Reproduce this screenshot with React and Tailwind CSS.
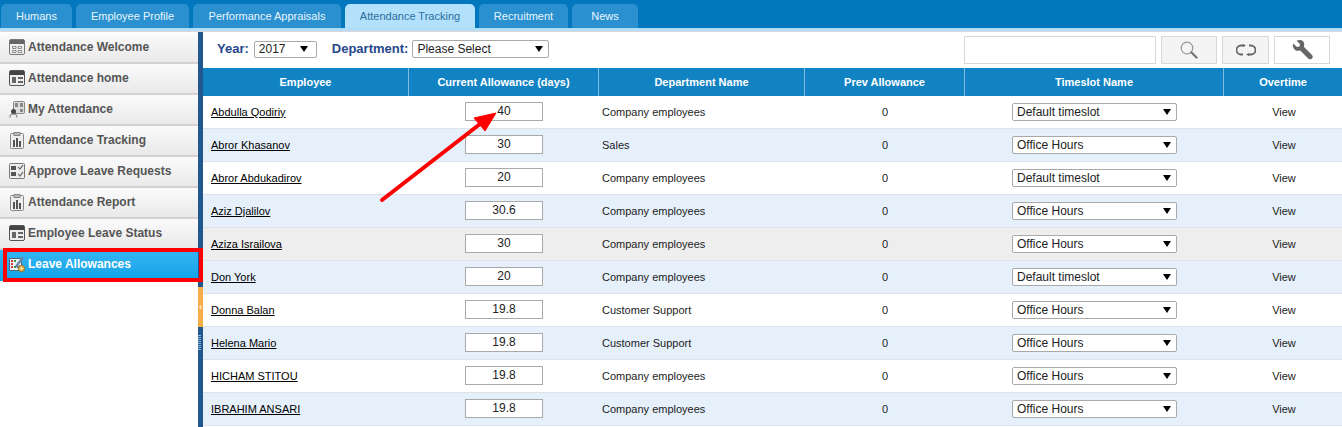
const tabs = [
  { name: "Humans", w: "w-[71px]" },
  { name: "Employee Profile", w: "w-[113px]" },
  { name: "Performance Appraisals", w: "w-[148px]" },
  { name: "Attendance Tracking", w: "w-[130px]", active: true },
  { name: "Recruitment", w: "w-[89px]" },
  { name: "News", w: "w-[66px]" },
];

const menu = [
  { name: "Attendance Welcome", icon: "grid" },
  { name: "Attendance home", icon: "layout" },
  { name: "My Attendance", icon: "user" },
  { name: "Attendance Tracking", icon: "clip" },
  { name: "Approve Leave Requests", icon: "check" },
  { name: "Attendance Report", icon: "clip" },
  { name: "Employee Leave Status", icon: "layout" },
  { name: "Leave Allowances", icon: "gear", active: true },
];

const rows = [
  ["Abdulla Qodiriy", "40", "Company employees", "Default timeslot"],
  ["Abror Khasanov", "30", "Sales", "Office Hours"],
  ["Abror Abdukadirov", "20", "Company employees", "Default timeslot"],
  ["Aziz Djalilov", "30.6", "Company employees", "Office Hours"],
  ["Aziza Israilova", "30", "Company employees", "Office Hours"],
  ["Don York", "20", "Company employees", "Default timeslot"],
  ["Donna Balan", "19.8", "Customer Support", "Office Hours"],
  ["Helena Mario", "19.8", "Customer Support", "Office Hours"],
  ["HICHAM STITOU", "19.8", "Company employees", "Office Hours"],
  ["IBRAHIM ANSARI", "19.8", "Company employees", "Office Hours"],
];

function MenuIcon({ type }) {
  if (type === "grid") {
    return (
      <svg width="17" height="17" viewBox="0 0 17 17" className="shrink-0">
        <rect x="0.5" y="0.5" width="15" height="15" rx="1.5" fill="#eee" stroke="#777" />
        <rect x="1" y="1" width="14" height="4" fill="#666" />
        <path d="M3.500 7.500h3.500v2H3.500zM9 7.500h3.500v2H9zM3.500 11.500h3.500v2H3.500zM9 11.500h3.500v2H9z" fill="none" stroke="#777" strokeWidth="0.8" />
      </svg>
    );
  }
  if (type === "layout") {
    return (
      <svg width="17" height="17" viewBox="0 0 17 17" className="shrink-0">
        <rect x="0.5" y="0.5" width="15" height="15" rx="1.5" fill="#eee" stroke="#555" />
        <rect x="1" y="1" width="14" height="4" fill="#444" />
        <path d="M3 7h4v6H3zM9 7h5v2H9zM9 11h5v2H9z" fill="#666" />
      </svg>
    );
  }
  if (type === "user") {
    return (
      <svg width="17" height="17" viewBox="0 0 17 17" className="shrink-0">
        <rect x="4.5" y="0.5" width="11" height="12" rx="1" fill="#ddd" stroke="#888" />
        <path d="M6 2h3v4H6zM11 2h3v4h-3zM11 8h3v3h-3z" fill="#888" />
        <circle cx="4.500" cy="10.500" r="2.500" fill="#444" />
        <path d="M1 16.500c0-3 1-3.500 3.500-3.500s3.500 .5 3.500 3.500" fill="#eee" stroke="#666" />
      </svg>
    );
  }
  if (type === "clip") {
    return (
      <svg width="17" height="17" viewBox="0 0 17 17" className="shrink-0">
        <rect x="1.500" y="1.500" width="13" height="15" rx="1" fill="#eee" stroke="#888" />
        <rect x="5" y="0.500" width="6" height="3" fill="#bbb" stroke="#888" />
        <path d="M4 8h2v7H4zM7 6h2v9H7zM10 9h2v6h-2z" fill="#555" />
      </svg>
    );
  }
  if (type === "check") {
    return (
      <svg width="17" height="17" viewBox="0 0 17 17" className="shrink-0">
        <rect x="0.500" y="0.500" width="15" height="15" rx="1" fill="#eee" stroke="#777" />
        <path d="M2 3h5v4H2zM2 9h5v4H2z" fill="#555" />
        <path d="M9 4l2 2 3-4M9 11l2 2 3-4" fill="none" stroke="#777" strokeWidth="1.300" />
      </svg>
    );
  }
  return (
    <svg width="17" height="17" viewBox="0 0 17 17" className="shrink-0">
      <rect x="0.500" y="2.500" width="12" height="12" fill="#eaf2f8" stroke="#567" />
      <path d="M2 4h2v2H2zM2 7h2v2H2zM2 10h2v2H2z" fill="#d23a3a" />
      <path d="M5 4h2v2H5zM5 10h2v2H5z" fill="#3a9a3a" />
      <path d="M8 10h2v2H8z" fill="#2d6fc0" />
      <path d="M6 10L13 0.500l2 1.500L8 11.500z" fill="#6c86a3" />
      <circle cx="12.500" cy="12.500" r="3.200" fill="#e8b23a" stroke="#8a7440" />
      <circle cx="12.500" cy="12.500" r="1.100" fill="#fff" />
    </svg>
  );
}

function FakeSelect({ value, className }) {
  return (
    <div className={`flex items-center justify-between bg-white border border-[#a9a9a9] rounded-[2px] pl-1 text-[12px] text-[#222] ${className}`}>
      <span>{value}</span>
      <span className="w-0 h-0 border-x-[4px] border-x-transparent border-t-[6px] border-t-black" />
    </div>
  );
}

export default function App() {
  return (
    <div className="relative w-[1342px] h-[427px] overflow-hidden bg-white font-['Liberation_Sans',Arial,sans-serif]">
      <div className="h-[28px] bg-[#0277bd] flex items-end pl-[1px] gap-[4px]">
        {tabs.map((t) => (
          <div
            key={t.name}
            className={`${t.w} h-[24px] rounded-t-[5px] flex items-center justify-center text-[11px] ${
              t.active ? "bg-[#b3e0fa] text-[#2a6f9e]" : "bg-[#2a90d0] text-[#e8f5fc]"
            }`}
          >
            {t.name}
          </div>
        ))}
      </div>
      <div className="h-[4px] bg-[#b3dcf7] border-b border-[#d8d8d8]" />

      <div className="flex">
        <div className="w-[198px] shrink-0 pt-[1px]">
          {menu.map((m) => (
            <div
              key={m.name}
              className={`h-[31px] flex items-center gap-[2px] pl-[9px] pb-[1px] text-[12px] font-bold border-b-[2px] ${
                m.active
                  ? "bg-linear-to-b from-[#35b4f2] to-[#0ea4e8] text-white border-[#0ea4e8]"
                  : "bg-linear-to-b from-[#fbfbfb] to-[#e9e9e9] text-[#555] border-[#d5d1d1]"
              }`}
            >
              <MenuIcon type={m.icon} />
              <span>{m.name}</span>
            </div>
          ))}
        </div>
        <div className="relative w-[5px] shrink-0 bg-[#20588f] h-[395px]">
          <div className="absolute top-[255px] left-0 w-[5px] h-[40px] bg-[#f9ad47] flex items-center justify-center text-white text-[9px] font-bold leading-none">
            ‹
          </div>
          <div className="absolute top-[303px] left-0 w-[3px] h-[15px] bg-[repeating-linear-gradient(to_bottom,#8fb3d6_0,#8fb3d6_1px,transparent_1px,transparent_2px)]" />
        </div>

        <div className="flex-1">
          <div className="h-[36px] flex items-center pl-[14px] pr-[12px] text-[13px] font-bold text-[#27478a]">
            <div className="flex items-center pb-[2px]">
              <span>Year:</span>
              <FakeSelect value="2017" className="w-[63px] h-[17px] ml-[5px] pr-2 font-normal" />
              <span className="ml-[15px]">Department:</span>
              <FakeSelect value="Please Select" className="w-[137px] h-[18px] ml-[4px] pr-[5px] font-normal" />
            </div>
            <div className="ml-auto flex items-center">
              <div className="w-[192px] h-[28px] bg-white border border-[#d8d8d8]" />
              <div className="w-[56px] h-[28px] ml-[5px] bg-[#f4f4f4] border border-[#d8d8d8] flex items-center justify-center">
                <svg width="18" height="18" viewBox="0 0 18 18" fill="none">
                  <circle cx="7" cy="7" r="5.800" stroke="#999" strokeWidth="1.200" />
                  <path d="M11.500 11.500L16.500 16.500" stroke="#777" strokeWidth="2.400" strokeLinecap="round" />
                </svg>
              </div>
              <div className="w-[47px] h-[28px] ml-[5px] bg-[#f4f4f4] border border-[#d8d8d8] flex items-center justify-center">
                <svg width="20" height="12" viewBox="0 0 20 12" fill="none" stroke="#666" strokeWidth="1.800">
                  <path d="M8 1.500H5a4.500 4.500 0 0 0 0 9h2" />
                  <path d="M12 10.500h3a4.500 4.500 0 0 0 0-9h-2" />
                  <path d="M7 0L10 1.500L7 3z" fill="#666" stroke="none" />
                  <path d="M13 9L10 10.500L13 12z" fill="#666" stroke="none" />
                </svg>
              </div>
              <div className="w-[56px] h-[28px] ml-[5px] bg-white border border-[#d8d8d8] flex items-center justify-center">
                <svg width="21" height="21" viewBox="0 0 21 21">
                  <path
                    d="M1 3.500L5 7l2.500-.5L8 4 4.500 .8C7.500-.5 11-.5 12 3c.4 1.500.3 2.700-.2 3.800l8 8c1.200 1.200 1.200 2.800.2 3.800s-2.600 1-3.800-.2l-8-8C6.800 10.900 5 11 3.500 10.300 1.300 9.200.4 6 1 3.500z"
                    fill="#666"
                  />
                </svg>
              </div>
            </div>
          </div>

          <div className="grid grid-cols-[206px_190px_206px_160px_259px_118px] h-[28px] bg-[#1283c2] text-white text-[11px] font-bold text-center">
            {["Employee", "Current Allowance (days)", "Department Name", "Prev Allowance", "Timeslot Name", "Overtime"].map((h, i) => (
              <div key={h} className={`flex items-center justify-center ${i < 5 ? "border-r border-[#7fbde0]" : ""}`}>
                {h}
              </div>
            ))}
          </div>

          {rows.map((r, i) => (
            <div
              key={r[0]}
              className={`grid grid-cols-[206px_190px_206px_160px_259px_118px] h-[33px] items-center text-[11px] text-[#222] border-b-[1px] border-[#dfe3e8] ${
                i === 4 ? "bg-[#eeeeee]" : i % 2 ? "bg-[#e6f0fb]" : "bg-white"
              }`}
            >
              <div className="pl-[8px]">
                <span className="underline text-black">{r[0]}</span>
              </div>
              <div className="flex justify-center -translate-y-[1px]">
                <input
                  readOnly
                  value={r[1]}
                  className="w-[78px] h-[19px] bg-white border border-[#a9a9a9] text-center text-[12px] text-[#222] outline-none"
                />
              </div>
              <div className="pl-[3px]">{r[2]}</div>
              <div className="text-center">0</div>
              <div className="flex justify-center">
                <FakeSelect value={r[3]} className="w-[165px] h-[18px] pr-[5px]" />
              </div>
              <div className="text-center pl-[2px]">View</div>
            </div>
          ))}
        </div>
      </div>

      {/* annotations on top of the screenshot */}
      <div className="absolute left-[3px] top-[248px] w-[200px] h-[34px] border-[4px] border-[#fe0000]" />
      <svg className="absolute left-[370px] top-[100px]" width="140" height="110" viewBox="370 100 140 110">
        <path d="M382 200L480 124" stroke="#fe0000" strokeWidth="4" strokeLinecap="round" fill="none" />
        <path d="M496 113L474 118L485 131Z" fill="#fe0000" stroke="#fe0000" />
      </svg>
    </div>
  );
}
